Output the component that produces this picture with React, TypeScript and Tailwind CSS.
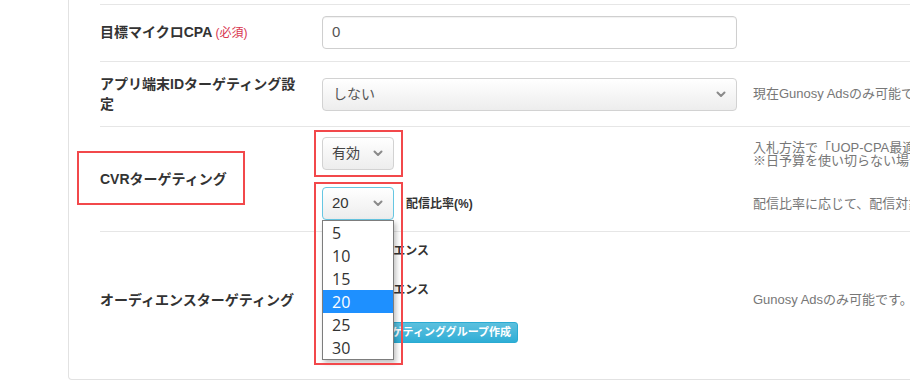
import React from "react";

const Chevron = () => (
  <svg width="10" height="7" viewBox="0 0 10 7" className="shrink-0">
    <path d="M1.5 1.5 L5 5 L8.5 1.5" stroke="#8a8a8a" strokeWidth="2" fill="none" strokeLinecap="round" strokeLinejoin="round" />
  </svg>
);

export default function App() {
  const options = ["5", "10", "15", "20", "25", "30"];
  return (
    <div className="relative w-[910px] h-[386px] overflow-hidden bg-white font-['Liberation_Sans','Noto_Sans_CJK_JP',sans-serif] text-[#333]">
      <div className="ml-[68px] w-[900px] border-l border-r border-b border-[#e2e2e2] rounded-b-[4px] pl-[31px] pt-[4px]">
        {/* Row 1 */}
        <div className="flex items-center border-t border-[#e6e6e6] pt-[11px] pb-[12px]">
          <div className="w-[202px] shrink-0 mr-[20px] text-[14px] font-bold leading-[20px] text-[#333] whitespace-nowrap">
            目標マイクロCPA <span className="text-[12px] font-normal text-[#d8364f]">(必須)</span>
          </div>
          <div className="w-[415px] shrink-0 h-[33px] rounded-[4px] border border-[#cfcfcf] bg-white shadow-[inset_0_1px_1px_rgba(0,0,0,0.06)] px-[9px] flex items-center text-[15px] text-[#555]">
            0
          </div>
        </div>

        {/* Row 2 */}
        <div className="flex items-center border-t border-[#e6e6e6] pt-[12px] pb-[12px]">
          <div className="w-[202px] shrink-0 mr-[20px] text-[14px] font-bold leading-[20px] text-[#333]">
            アプリ端末IDターゲティング設定
          </div>
          <div className="w-[415px] shrink-0 h-[33px] rounded-[4px] border border-[#d2d2d2] bg-gradient-to-b from-white to-[#ededed] pl-[10px] pr-[10px] flex items-center justify-between text-[14px] text-[#555]">
            <span>しない</span>
            <Chevron />
          </div>
          <div className="ml-[16px] shrink-0 text-[13px] text-[#777] whitespace-nowrap leading-[14px]">
            現在Gunosy Adsのみ可能です。
          </div>
        </div>

        {/* Row 3 */}
        <div className="flex border-t border-[#e6e6e6] pt-[10px] pb-[11px]">
          <div className="w-[202px] shrink-0 mr-[20px] self-center text-[14px] font-bold leading-[20px] text-[#333] whitespace-nowrap">
            CVRターゲティング
          </div>
          <div className="flex flex-col gap-[17px] shrink-0">
            <div className="flex items-center">
              <div className="w-[415px] shrink-0">
                <div className="w-[72px] h-[33px] rounded-[4px] border border-[#d2d2d2] bg-gradient-to-b from-white to-[#ededed] pl-[9px] pr-[10px] flex items-center justify-between text-[14px] text-[#444]">
                  <span>有効</span>
                  <Chevron />
                </div>
              </div>
              <div className="ml-[16px] shrink-0 text-[13px] text-[#777] whitespace-nowrap leading-[13px]">
                <div>入札方法で「UOP-CPA最適化」を選択した場合のみ有効です。</div>
                <div>※日予算を使い切らない場合があります。</div>
              </div>
            </div>
            <div className="flex items-center">
              <div className="w-[415px] shrink-0 flex items-center">
                <div className="relative z-20">
                  <div className="w-[72px] h-[33px] rounded-[4px] border border-[#66c6e2] bg-gradient-to-b from-white to-[#ededed] pl-[9px] pr-[10px] flex items-center justify-between text-[15px] text-[#333]">
                    <span>20</span>
                    <Chevron />
                  </div>
                  <div className="absolute left-0 top-[33px] w-[72px] bg-white border border-[#7d7d7d] shadow-[2px_3px_5px_rgba(0,0,0,0.25)] font-['Open_Sans','Liberation_Sans',sans-serif]">
                    {options.map((o) => (
                      <div
                        key={o}
                        className={
                          o === "20"
                            ? "h-[23px] pl-[9px] flex items-center text-[16px] bg-[#1e90ff] text-white"
                            : "h-[23px] pl-[9px] flex items-center text-[16px] text-[#333]"
                        }
                      >
                        {o}
                      </div>
                    ))}
                  </div>
                </div>
                <span className="ml-[12px] text-[12px] font-bold text-[#333]">配信比率(%)</span>
              </div>
              <div className="ml-[16px] shrink-0 text-[13px] text-[#777] whitespace-nowrap leading-[13px]">
                配信比率に応じて、配信対象ユーザーを絞り込みます。
              </div>
            </div>
          </div>
        </div>

        {/* Row 4 */}
        <div className="flex items-center border-t border-[#e6e6e6] pt-[11px] pb-[22px]">
          <div className="w-[202px] shrink-0 mr-[20px] text-[14px] font-bold leading-[20px] text-[#333] whitespace-nowrap">
            オーディエンスターゲティング
          </div>
          <div className="w-[415px] shrink-0 flex flex-col">
            <div className="h-[16px] leading-[16px] text-[12px] font-bold text-[#333]">配信オーディエンス</div>
            <div className="mt-[23px] h-[16px] leading-[16px] text-[12px] font-bold text-[#333]">除外オーディエンス</div>
            <div className="mt-[24px] flex">
              <button className="w-[196px] h-[21px] rounded-[3px] border border-[#2aabd2] bg-gradient-to-b from-[#5bc0de] to-[#2eaed6] text-white text-[11px] font-bold flex items-center justify-end pr-[6px] whitespace-nowrap">
                ＋ 新規ターゲティンググループ作成
              </button>
            </div>
            <div className="h-[14px]" />
          </div>
          <div className="ml-[16px] shrink-0 text-[13px] text-[#777] whitespace-nowrap leading-[14px]">
            Gunosy Adsのみ可能です。
          </div>
        </div>
      </div>

      {/* Annotation boxes */}
      <div className="absolute left-[77px] top-[151px] w-[168px] h-[54px] border-2 border-[#f2484b] z-30" />
      <div className="absolute left-[314px] top-[130px] w-[89px] h-[47px] border-2 border-[#f2484b] z-30" />
      <div className="absolute left-[314px] top-[182px] w-[89px] h-[183px] border-2 border-[#f2484b] z-30" />
    </div>
  );
}
